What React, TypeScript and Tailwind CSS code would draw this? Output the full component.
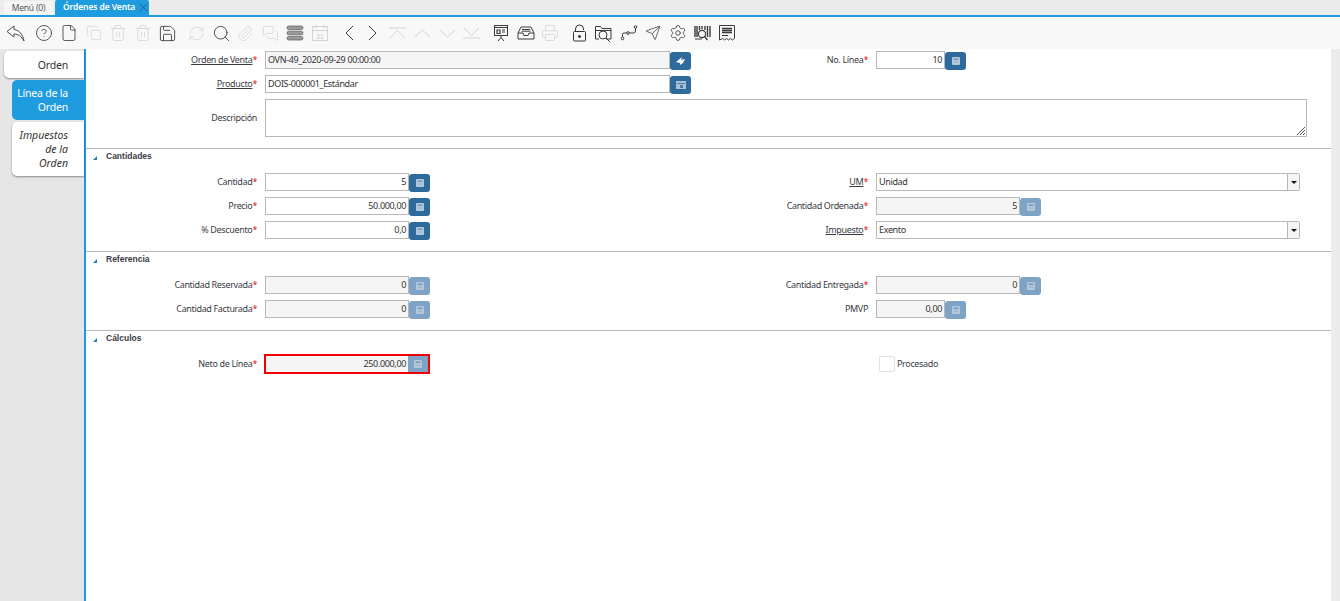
import type { ReactNode } from "react";
import {
  CircleHelp,
  File,
  Copy,
  Trash2,
  Save,
  RefreshCw,
  Search,
  Paperclip,
  MessagesSquare,
  Printer,
  Send,
  Settings,
  X,
} from "lucide-react";

const DIM = "text-[#d4d4d4]";
const DARK = "text-[#3a3a3a]";
const TXT = "text-[9px] tracking-[-0.35px]";

function Slot({ children, ml }: { children: ReactNode; ml?: boolean }) {
  return <div className={`w-[24.6px] h-full flex items-center justify-center shrink-0 ${ml ? "ml-[4.6px]" : ""}`}>{children}</div>;
}

function Back() {
  return (
    <svg width="19" height="17" viewBox="0 0 19 17" fill="none" stroke="#4a4a4a">
      <path d="M8 1L1 6.5 8 12V9C12 9 15.500 11.500 18 16 17 10 13.500 5 8 4.500Z" />
    </svg>
  );
}

function Bars() {
  return (
    <svg width="18" height="16" viewBox="0 0 18 16" fill="#9a9a9a" stroke="#5a5a5a" strokeWidth="0.7">
      <rect x="1" y="1" width="16" height="3.6" rx="1.8" />
      <rect x="1" y="6.2" width="16" height="3.6" rx="1.8" />
      <rect x="1" y="11.4" width="16" height="3.600" rx="1.8" />
    </svg>
  );
}

function Cal() {
  return (
    <svg width="18" height="18" viewBox="0 0 18 18" fill="none" stroke="#d4d4d4">
      <rect x="1.500" y="2.500" width="15" height="14" />
      <path d="M1.500 6.500h15M5 1v3M13 1v3" />
      <text x="9" y="15" textAnchor="middle" fontSize="7" fill="#cfcfcf" stroke="none" fontFamily="Liberation Sans, sans-serif">31</text>
    </svg>
  );
}

function Chev({ d, w, h, color }: { d: string; w: number; h: number; color: string }) {
  return (
    <svg width={w} height={h} viewBox={`0 0 ${w} ${h}`} fill="none" stroke={color}>
      <path d={d} />
    </svg>
  );
}

function Board() {
  return (
    <svg width="16" height="18" viewBox="0 0 16 18" fill="none" stroke="#3a3a3a">
      <rect x="1.500" y="1.500" width="13" height="10" />
      <path d="M1 3.500h14" />
      <path d="M4 6h3v3.500H4zM9 6h3M9 8h3" strokeWidth="1.2" />
      <path d="M8 11.500v2M8 13.500l-3 3.500M8 13.500l3 3.500" />
    </svg>
  );
}

function Inbox() {
  return (
    <svg width="18" height="16" viewBox="0 0 18 16" fill="none" stroke="#3a3a3a">
      <path d="M4 2h10l3 6v6H1V8z" />
      <path d="M1 8h5l1 2.500h4L12 8h5" />
      <path d="M5 4.500h8M4.500 6.200h9" />
    </svg>
  );
}

function Lock() {
  return (
    <svg width="15" height="18" viewBox="0 0 15 18" fill="none" stroke="#333">
      <path d="M3.500 7.500V5a4 4 0 0 1 8 0v1" />
      <rect x="1.500" y="7.500" width="12" height="9.500" rx="1" />
      <circle cx="7.500" cy="12.500" r="1.100" fill="#333" />
    </svg>
  );
}

function FolderSearch() {
  return (
    <svg width="20" height="19" viewBox="0 0 20 19" fill="none" stroke="#3a3a3a">
      <path d="M1.500 15V2.500h5l1.500 2h9V15H12" />
      <path d="M1.500 6.500h15.500" />
      <circle cx="9" cy="11" r="4" />
      <path d="M12 14l4 4" />
      <path d="M1.500 15H5" />
    </svg>
  );
}

function Workflow() {
  return (
    <svg width="18" height="16" viewBox="0 0 18 16" fill="none" stroke="#3a3a3a">
      <circle cx="2.500" cy="13.500" r="1.300" />
      <circle cx="8" cy="8" r="1.300" />
      <circle cx="15.500" cy="2" r="1.300" />
      <path d="M2.500 12V9.200Q2.500 8 4 8h2.700M9.300 8h4.200q2 0 2-2V3.300" />
    </svg>
  );
}

function Barcode() {
  return (
    <svg width="17" height="16" viewBox="0 0 17 16" fill="none" stroke="#3a3a3a">
      <path d="M1 1v11M3 1v11M5.500 1v4M8 1v3M11 1v4M13.500 1v11M16 1v11" strokeWidth="1.4" />
      <circle cx="8" cy="9" r="3.600" strokeWidth="1.2" />
      <path d="M10.500 11.500l3 3.500" strokeWidth="1.3" />
      <path d="M1 14h7" />
    </svg>
  );
}

function Certificate() {
  return (
    <svg width="18" height="18" viewBox="0 0 18 18" fill="none" stroke="#3a3a3a">
      <path d="M1.500 1.500h15v13l-2 1.500-2-1.500-2 1.500-2-1.500-2 1.500-2-1.500-3 1.500z" />
      <path d="M4 4.500h10M4 6.500h10M4 8.500h10" strokeWidth="1.3" />
      <path d="M4 11.500h6" />
    </svg>
  );
}

function Toolbar() {
  const s = 1.1;
  return (
    <div className="h-[32px] bg-[#f8f8f8] flex items-center pl-[3px] shrink-0">
      <Slot><Back /></Slot>
      <Slot ml><CircleHelp size={18} strokeWidth={s} className={DARK} /></Slot>
      <Slot><File size={18} strokeWidth={s} className={DARK} /></Slot>
      <Slot><Copy size={16} strokeWidth={s} className={DIM} /></Slot>
      <Slot><Trash2 size={18} strokeWidth={s} className={DIM} /></Slot>
      <Slot><Trash2 size={18} strokeWidth={s} className={DIM} /></Slot>
      <Slot><Save size={19} strokeWidth={s} className={DARK} /></Slot>
      <Slot ml><RefreshCw size={17} strokeWidth={s} className={DIM} /></Slot>
      <Slot><Search size={19} strokeWidth={s} className={DARK} /></Slot>
      <Slot><Paperclip size={17} strokeWidth={s} className={DIM} /></Slot>
      <Slot><MessagesSquare size={17} strokeWidth={s} className={DIM} /></Slot>
      <Slot><Bars /></Slot>
      <Slot><Cal /></Slot>
      <Slot ml><Chev w={10} h={16} d="M9 1L2 8l7 7" color="#3a3a3a" /></Slot>
      <Slot><Chev w={10} h={16} d="M1 1l7 7-7 7" color="#3a3a3a" /></Slot>
      <Slot><Chev w={17} h={12} d="M0 1h17M1 11l7.500-7.500L16 11" color="#d4d4d4" /></Slot>
      <Slot><Chev w={17} h={9} d="M1 8l7.500-7L16 8" color="#d4d4d4" /></Slot>
      <Slot><Chev w={17} h={9} d="M1 1l7.500 7L16 1" color="#d4d4d4" /></Slot>
      <Slot><Chev w={17} h={12} d="M1 1l7.500 7.500L16 1M0 11h17" color="#d4d4d4" /></Slot>
      <Slot ml><Board /></Slot>
      <Slot><Inbox /></Slot>
      <Slot><Printer size={18} strokeWidth={s} className={DIM} /></Slot>
      <Slot ml><Lock /></Slot>
      <Slot><FolderSearch /></Slot>
      <Slot><Workflow /></Slot>
      <Slot><Send size={16} strokeWidth={s} className={DARK} /></Slot>
      <Slot><Settings size={18} strokeWidth={s} className={DARK} /></Slot>
      <Slot><Barcode /></Slot>
      <Slot><Certificate /></Slot>
    </div>
  );
}

function CalcIcon() {
  return (
    <svg width="8" height="8" viewBox="0 0 8 8">
      <rect width="8" height="8" rx="1" fill="#b4c8db" />
      <rect x="1.500" y="1.500" width="5" height="1.400" fill="#6f93b5" />
      <rect x="1.500" y="4.500" width="5" height="1" fill="#93afc9" />
    </svg>
  );
}

function Btn({ off, children }: { off?: boolean; children?: ReactNode }) {
  return (
    <div className={`w-[21px] h-[18px] mt-px rounded-[3px] flex items-center justify-center shrink-0 ${off ? "bg-[#7ea3c4]" : "bg-[#2f6a9c]"}`}>
      {children ?? <CalcIcon />}
    </div>
  );
}

function Label({ text, link, noStar, w }: { text: string; link?: boolean; noStar?: boolean; w: string }) {
  return (
    <div className={`${w} shrink-0 flex justify-end items-center h-[18px] ${TXT} text-[#3b3b45] whitespace-nowrap`}>
      <span className={link ? "underline" : ""}>{text}</span>
      {noStar ? null : <span className="text-[#e0101a]">*</span>}
    </div>
  );
}

function Field({
  label,
  value,
  w,
  off,
  lit,
  right,
  link,
  noStar,
  second,
  btn,
}: {
  label: string;
  value: string;
  w: string;
  off?: boolean;
  lit?: boolean;
  right?: boolean;
  link?: boolean;
  noStar?: boolean;
  second?: boolean;
  btn?: ReactNode;
}) {
  return (
    <div className="flex items-start gap-2">
      <Label text={label} link={link} noStar={noStar} w={second ? "w-[162px]" : "w-[171px]"} />
      <div className="flex shrink-0">
        <div
          className={`${w} h-[18px] border border-[#b8b8b8] px-[2px] flex items-center ${TXT} text-[#333] ${off ? "bg-[#f5f5f5]" : "bg-white"} ${right ? "justify-end" : ""}`}
        >
          {value}
        </div>
        <Btn off={off && !lit}>{btn}</Btn>
      </div>
    </div>
  );
}

function Combo({ label, value }: { label: string; value: string }) {
  return (
    <div className="flex items-start gap-2">
      <Label text={label} link w="w-[162px]" />
      <div className={`w-[424px] h-[18px] border border-[#b8b8b8] rounded-r-[2px] flex items-center ${TXT} text-[#333] shrink-0`}>
        <div className="flex-1 px-[2px]">{value}</div>
        <div className="w-[12px] h-full border-l border-[#b8b8b8] bg-[#f5f5f5] flex items-center justify-center">
          <div className="w-0 h-0 border-l-[3px] border-r-[3px] border-t-[3px] border-l-transparent border-r-transparent border-t-[#111]" />
        </div>
      </div>
    </div>
  );
}

function Row({ left, right }: { left?: ReactNode; right?: ReactNode }) {
  return (
    <div className="flex h-[18px]">
      <div className="w-[620px] shrink-0">{left}</div>
      <div className="flex-1">{right}</div>
    </div>
  );
}

function Section({ title, children }: { title: string; children: ReactNode }) {
  return (
    <section className="border-t border-[#b8b8b8] mt-[11px]">
      <div className="flex items-center h-[14px] pl-[7px] mb-[10px]">
        <div className="w-0 h-0 mt-[3px] border-b-[4px] border-l-[4px] border-b-[#2f78bd] border-l-transparent" />
        <span className="ml-[9px] text-[8.5px] font-bold text-[#3b3b45] font-['Liberation_Sans',sans-serif]">{title}</span>
      </div>
      <div className="flex flex-col gap-[6px] pb-px">{children}</div>
    </section>
  );
}

function Tabs() {
  return (
    <div className="w-[86px] shrink-0 bg-[#e6e6e6] border-r-2 border-[#1d9be0] pt-[2px] flex flex-col items-end text-right text-[10.5px] tracking-[-0.2px] leading-[14px] text-[#333] whitespace-nowrap">
      <div className="w-[80px] h-[27px] bg-white rounded-l-[5px] shadow-[0_1px_2px_rgba(0,0,0,0.4)] pr-[16px] flex items-center justify-end">Orden</div>
      <div className="w-[72px] h-[40px] mt-[2px] bg-[#1f9be0] text-white rounded-l-[5px] pr-[16px] pt-[6px]">
        Línea de la
        <br />
        Orden
      </div>
      <div className="w-[72px] h-[54px] mt-[2px] bg-white rounded-l-[5px] shadow-[0_1px_2px_rgba(0,0,0,0.4)] pr-[16px] pt-[6px] italic tracking-normal">
        Impuestos
        <br />
        de la
        <br />
        Orden
      </div>
    </div>
  );
}

export default function App() {
  return (
    <div className="w-[1340px] h-[601px] overflow-hidden flex flex-col bg-white font-['Noto_Sans',sans-serif]">
      <div className="h-[15px] bg-[#ececec] flex items-end pl-[4px] shrink-0">
        <div className="w-[49px] h-[14px] bg-[#f5f5f5] text-[8.5px] tracking-[-0.2px] text-[#555] flex items-center justify-center">Menú (0)</div>
        <div className="w-[94px] h-[15px] ml-[2px] bg-[#1f9be0] text-[8.5px] font-semibold tracking-[-0.1px] text-white rounded-t-[2px] flex items-center pl-[8px] gap-[1px] whitespace-nowrap">
          Órdenes de Venta
          <X size={15} strokeWidth={0.9} className="text-[#1b3a55] shrink-0" />
        </div>
      </div>
      <div className="h-[2px] bg-[#1f9be0] shrink-0" />
      <Toolbar />
      <div className="flex-1 flex min-h-0">
        <Tabs />
        <main className="flex-1 pt-[2px]">
          <div className="flex flex-col gap-[6px]">
            <Row
              left={
                <Field
                  label="Orden de Venta"
                  value="OVN-49_2020-09-29 00:00:00"
                  w="w-[405px]"
                  off
                  lit
                  link
                  btn={
                    <svg width="9" height="8" viewBox="0 0 9 8" fill="#fff">
                      <path d="M0 5L6 0 5 3 9 2 7 6 4 8V6z" />
                    </svg>
                  }
                />
              }
              right={<Field second label="No. Línea" value="10" w="w-[69px]" right />}
            />
            <Row
              left={
                <Field
                  label="Producto"
                  value="DOIS-000001_Estándar"
                  w="w-[405px]"
                  link
                  btn={
                    <svg width="10" height="8" viewBox="0 0 10 8">
                      <rect width="10" height="8" fill="#a9c2d8" />
                      <rect x="1" y="2" width="8" height="1" fill="#4d7ba5" />
                      <rect x="4" y="4" width="3" height="3" fill="#4d7ba5" />
                    </svg>
                  }
                />
              }
            />
            <div className="flex items-start h-[38px] gap-2">
              <div className={`w-[171px] text-right ${TXT} text-[#3b3b45] pt-[12px]`}>Descripción</div>
              <div className="w-[1042px] h-[38px] border border-[#b8b8b8] relative">
                <svg width="8" height="8" viewBox="0 0 8 8" stroke="#555" className="absolute right-[1px] bottom-[1px]">
                  <path d="M8 0L0 8M8 3L3 8M8 6L6 8" />
                </svg>
              </div>
            </div>
          </div>
          <Section title="Cantidades">
            <Row
              left={<Field label="Cantidad" value="5" w="w-[144px]" right />}
              right={<Combo label="UM" value="Unidad" />}
            />
            <Row
              left={<Field label="Precio" value="50.000,00" w="w-[144px]" right />}
              right={<Field second label="Cantidad Ordenada" value="5" w="w-[144px]" off right />}
            />
            <Row
              left={<Field label="% Descuento" value="0,0" w="w-[144px]" right />}
              right={<Combo label="Impuesto" value="Exento" />}
            />
          </Section>
          <Section title="Referencia">
            <Row
              left={<Field label="Cantidad Reservada" value="0" w="w-[144px]" off right />}
              right={<Field second label="Cantidad Entregada" value="0" w="w-[144px]" off right />}
            />
            <Row
              left={<Field label="Cantidad Facturada" value="0" w="w-[144px]" off right />}
              right={<Field second label="PMVP" value="0,00" w="w-[69px]" off right noStar />}
            />
          </Section>
          <Section title="Cálculos">
            <Row
              left={
                <div className="flex items-start gap-[7px]">
                  <Label text="Neto de Línea" w="w-[171px]" />
                  <div className="flex shrink-0 border-2 border-[#f00000] -mt-px h-[20px] w-[166px]">
                    <div className={`flex-1 bg-[#f5f5f5] ${TXT} text-[#333] flex items-center justify-end pr-[2px]`}>250.000,00</div>
                    <div className="w-[20px] bg-[#7ea3c4] flex items-center justify-center">
                      <CalcIcon />
                    </div>
                  </div>
                </div>
              }
              right={
                <div className={`flex items-center h-[18px] pl-[173px] gap-[2px] ${TXT} text-[#3b3b45]`}>
                  <div className="w-[16px] h-[16px] border border-[#e2e2e2] rounded-[2px]" />
                  Procesado
                </div>
              }
            />
          </Section>
        </main>
        <div className="w-[9px] bg-[#ececec] shrink-0" />
      </div>
    </div>
  );
}
